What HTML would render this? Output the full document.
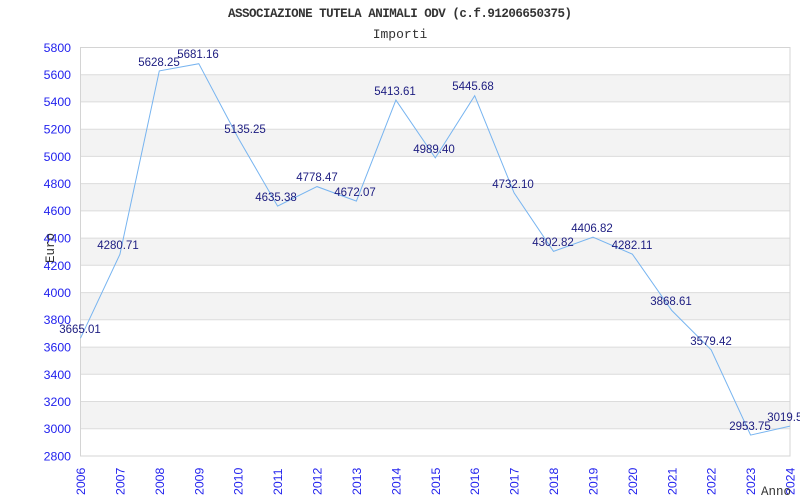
<!DOCTYPE html>
<html><head><meta charset="utf-8"><style>html,body{margin:0;padding:0;background:#fff}svg{display:block}</style></head><body>
<svg width="800" height="500" xmlns="http://www.w3.org/2000/svg">
<rect width="800" height="500" fill="#fff"/>
<g fill="#f3f3f3">
<rect x="80.5" y="74.7" width="709.5" height="27.2"/>
<rect x="80.5" y="129.2" width="709.5" height="27.2"/>
<rect x="80.5" y="183.6" width="709.5" height="27.2"/>
<rect x="80.5" y="238.1" width="709.5" height="27.2"/>
<rect x="80.5" y="292.6" width="709.5" height="27.2"/>
<rect x="80.5" y="347.1" width="709.5" height="27.2"/>
<rect x="80.5" y="401.5" width="709.5" height="27.2"/>
</g>
<g stroke="#dcdcdc" stroke-width="1">
<line x1="80.5" x2="790" y1="74.7" y2="74.7"/><line x1="80.5" x2="790" y1="101.9" y2="101.9"/>
<line x1="80.5" x2="790" y1="129.2" y2="129.2"/><line x1="80.5" x2="790" y1="156.4" y2="156.4"/>
<line x1="80.5" x2="790" y1="183.6" y2="183.6"/><line x1="80.5" x2="790" y1="210.9" y2="210.9"/>
<line x1="80.5" x2="790" y1="238.1" y2="238.1"/><line x1="80.5" x2="790" y1="265.3" y2="265.3"/>
<line x1="80.5" x2="790" y1="292.6" y2="292.6"/><line x1="80.5" x2="790" y1="319.8" y2="319.8"/>
<line x1="80.5" x2="790" y1="347.1" y2="347.1"/><line x1="80.5" x2="790" y1="374.3" y2="374.3"/>
<line x1="80.5" x2="790" y1="401.5" y2="401.5"/><line x1="80.5" x2="790" y1="428.8" y2="428.8"/>
</g>
<rect x="80.5" y="47.5" width="709.5" height="408.5" fill="none" stroke="#d4d4d4"/>
<text x="400" y="17" font-family="Liberation Mono, monospace" font-weight="bold" font-size="12.5" fill="#333" text-anchor="middle" textLength="344">ASSOCIAZIONE TUTELA ANIMALI ODV (c.f.91206650375)</text>
<text x="400" y="38" font-family="Liberation Mono, monospace" font-size="13" fill="#333" text-anchor="middle">Importi</text>
<g font-family="Liberation Sans, sans-serif" font-size="12.3" fill="#2222ee" text-anchor="end">
<text x="71" y="52">5800</text><text x="71" y="79">5600</text><text x="71" y="106">5400</text><text x="71" y="133.5">5200</text>
<text x="71" y="161">5000</text><text x="71" y="188">4800</text><text x="71" y="215">4600</text><text x="71" y="242.5">4400</text>
<text x="71" y="270">4200</text><text x="71" y="297">4000</text><text x="71" y="324">3800</text><text x="71" y="351.5">3600</text>
<text x="71" y="379">3400</text><text x="71" y="406">3200</text><text x="71" y="433">3000</text><text x="71" y="460.5">2800</text>
</g>
<g font-family="Liberation Sans, sans-serif" font-size="12.3" fill="#2222ee">
<text transform="translate(85,495) rotate(-90)">2006</text>
<text transform="translate(124.4,495) rotate(-90)">2007</text>
<text transform="translate(163.8,495) rotate(-90)">2008</text>
<text transform="translate(203.3,495) rotate(-90)">2009</text>
<text transform="translate(242.7,495) rotate(-90)">2010</text>
<text transform="translate(282.1,495) rotate(-90)">2011</text>
<text transform="translate(321.5,495) rotate(-90)">2012</text>
<text transform="translate(360.9,495) rotate(-90)">2013</text>
<text transform="translate(400.4,495) rotate(-90)">2014</text>
<text transform="translate(439.8,495) rotate(-90)">2015</text>
<text transform="translate(479.2,495) rotate(-90)">2016</text>
<text transform="translate(518.6,495) rotate(-90)">2017</text>
<text transform="translate(558,495) rotate(-90)">2018</text>
<text transform="translate(597.5,495) rotate(-90)">2019</text>
<text transform="translate(636.9,495) rotate(-90)">2020</text>
<text transform="translate(676.3,495) rotate(-90)">2021</text>
<text transform="translate(715.7,495) rotate(-90)">2022</text>
<text transform="translate(755.1,495) rotate(-90)">2023</text>
<text transform="translate(794.5,495) rotate(-90)">2024</text>
</g>
<text x="761" y="495" font-family="Liberation Mono, monospace" font-size="12.5" fill="#333">Anno</text>
<text transform="translate(54,263) rotate(-90)" font-family="Liberation Mono, monospace" font-size="12.5" fill="#333">Euro</text>
<polyline fill="none" stroke="#77b4f0" stroke-width="1" points="80.5,338.2 119.9,254.4 159.3,70.9 198.8,63.7 238.2,138 277.6,206.1 317,186.6 356.4,201.1 395.9,100.1 435.3,157.9 474.7,95.7 514.1,192.9 553.5,251.4 593,237.2 632.4,254.2 671.8,310.5 711.2,349.9 750.6,435.1 790,426.1"/>
<g font-family="Liberation Sans, sans-serif" font-size="11.5" fill="#1c1c80" text-anchor="middle">
<text x="80" y="333">3665.01</text>
<text x="118" y="249">4280.71</text>
<text x="159" y="66">5628.25</text>
<text x="198" y="58">5681.16</text>
<text x="245" y="133">5135.25</text>
<text x="276" y="201">4635.38</text>
<text x="317" y="181">4778.47</text>
<text x="355" y="196">4672.07</text>
<text x="395" y="95">5413.61</text>
<text x="434" y="153">4989.40</text>
<text x="473" y="90">5445.68</text>
<text x="513" y="188">4732.10</text>
<text x="553" y="246">4302.82</text>
<text x="592" y="232">4406.82</text>
<text x="632" y="249">4282.11</text>
<text x="671" y="305">3868.61</text>
<text x="711" y="345">3579.42</text>
<text x="750" y="430">2953.75</text>
<text x="788" y="421">3019.50</text>
</g>
</svg>
</body></html>
